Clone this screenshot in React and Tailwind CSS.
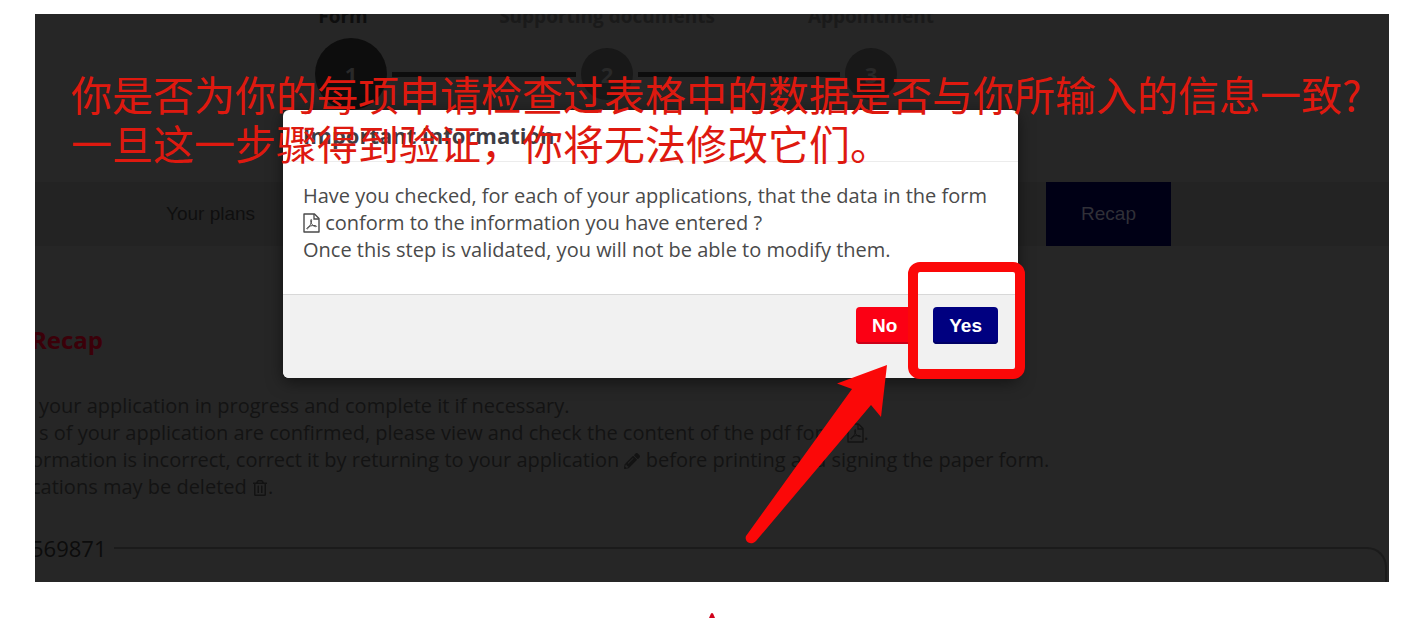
import { FaPencilAlt, FaRegTrashAlt } from 'react-icons/fa';

const PdfIcon = ({ className }) => (
  <svg viewBox="0 0 17 20" fill="none" stroke="currentColor" className={className} aria-hidden="true">
    <path d="M1 1h10.500l4.500 4.500V19H1z" strokeWidth="1.400" strokeLinejoin="round" />
    <path d="M11 1v5h5" strokeWidth="1.300" />
    <path
      d="M8 6.500c-.8 1.500.2 3.800 1.400 5.300 1.200 1.500 3 2.200 4 1.700.7-.7-1.600-1.300-4-.9-2.300.3-4.600 1.200-5.500 2.600-.5 1 .6 1.100 1.500-.2 1.400-2 2.900-4.900 3.200-6.900.1-1-.2-1.900-.6-1.600z"
      strokeWidth="1"
    />
  </svg>
);

const steps = ['Form', 'Supporting documents', 'Appointment'];

const Stepper = () => (
  <div className="-mt-2.5">
    {/* step names */}
    <div className="ml-[176px] grid w-[792px] grid-cols-3 text-center text-[19px] leading-6 font-bold text-[#1a1a1a]">
      {steps.map((step, index) => (
        <span key={step} className={index === 0 ? 'text-[#0e0e0e]' : ''}>
          {step}
        </span>
      ))}
    </div>

    {/* numbered circles */}
    <div className="mt-2.5 ml-[280px] flex items-center text-[22px] font-bold text-[#292929]">
      <span className="flex size-[72px] items-center justify-center rounded-full bg-[#0d0d0d]">1</span>
      <span className="mx-[5px] h-[5px] w-[184px] bg-[#0d0d0d]" />
      <span className="flex size-[52px] items-center justify-center rounded-full bg-[#181818]">2</span>
      <span className="mx-[5px] h-[5px] w-[202px] bg-[#0d0d0d]" />
      <span className="flex size-[52px] items-center justify-center rounded-full bg-[#181818]">3</span>
    </div>
  </div>
);

const Modal = () => (
  <div
    role="dialog"
    aria-labelledby="modal-title"
    className="absolute top-24 left-[248px] w-[735px] overflow-hidden rounded-md bg-white text-[#4a4a4a] shadow-[0_4px_16px_rgba(0,0,0,0.5)]"
  >
    <h2 id="modal-title" className="border-b border-[#ececec] px-5 py-3 text-[22px] leading-[27px] font-bold text-[#3d3d44]">
      Important information
    </h2>
    <p className="px-5 pt-5 pb-[31px] text-xl leading-[27px] whitespace-nowrap">
      Have you checked, for each of your applications, that the data in the form
      <br />
      <PdfIcon className="inline h-5 w-[17px] align-[-3px]" /> conform to the information you have entered ?
      <br />
      Once this step is validated, you will not be able to modify them.
    </p>
    <div className="flex justify-end gap-5 border-t border-[#d8d8d8] bg-[#f1f1f1] px-5 pt-3 pb-[34px] font-['Liberation_Sans',sans-serif] text-[19px] font-bold text-white">
      <button type="button" className="h-[37px] rounded-sm bg-[#fb0014] px-4 pt-0.5 shadow-[inset_0_-2px_0_#cc0018]">
        No
      </button>
      <button type="button" className="h-[37px] rounded-sm bg-[#000080] px-4 pt-0.5 shadow-[inset_0_-2px_0_#000066]">
        Yes
      </button>
    </div>
  </div>
);

const App = () => {
  return (
    <main className="overflow-hidden bg-white pt-3.5 pr-[37px] pl-[35px] font-['Open_Sans',sans-serif]">
      <div className="relative overflow-hidden bg-[#262626]">
        <Stepper />

        {/* tabs */}
        <nav className="mt-[72px] flex h-16 justify-between bg-[#232323] pr-[218px] pl-24 font-['Liberation_Sans',sans-serif] text-[19px]">
          <button type="button" className="px-[35px] text-[#0f0f0f]">Your plans</button>
          <button type="button" className="bg-[#000015] px-[35px] text-[#303038]">Recap</button>
        </nav>

        {/* recap */}
        <section className="-ml-1 text-[#131313]">
          <h1 className="mt-[78px] text-2xl leading-8 font-bold text-[#3b0009]">Recap</h1>
          <div className="mt-9 text-xl leading-[27px] whitespace-nowrap">
            <p className="pl-2">your application in progress and complete it if necessary.</p>
            <p className="pl-2">
              s of your application are confirmed, please view and check the content of the pdf form{' '}
              <PdfIcon className="inline h-5 w-[17px] align-[-3px]" />.
            </p>
            <p>
              ormation is incorrect, correct it by returning to your application{' '}
              <FaPencilAlt className="inline size-4 align-[-2px]" /> before printing and signing the paper form.
            </p>
            <p>
              cations may be deleted <FaRegTrashAlt className="inline size-4 align-[-2px]" />.
            </p>
          </div>
          <fieldset className="mt-8 mr-0.5 rounded-tr-[20px] border-t-2 border-r-2 border-[#1b1b1b] pb-[18px]">
            <legend className="pr-2 text-[22px] leading-8 text-[#0c0c0c]">569871</legend>
          </fieldset>
        </section>

        <Modal />

        {/* translated note */}
        <p
          lang="zh-CN"
          className="absolute top-[55px] left-9 font-['Noto_Sans_CJK_SC',sans-serif] text-[41px] leading-[49px] whitespace-nowrap text-[#de190f]"
        >
          你是否为你的每项申请检查过表格中的数据是否与你所输入的信息一致?
          <br />
          一旦这一步骤得到验证，你将无法修改它们。
        </p>

        {/* highlight around "Yes" and arrow */}
        <div className="absolute top-[248px] left-[873px] size-[117px] rounded-xl border-10 border-[#fb0808]" />
        <svg viewBox="0 0 142 179" className="absolute top-[351px] left-[710px] h-[179px] w-[142px]" aria-hidden="true">
          <path d="M142 0 92 18.500l15 5.500L1 171c-2 6 5 10 10 5L126 40l10 12z" fill="#fb0808" />
        </svg>
      </div>

      {/* tip of the red mark below */}
      <div className="mt-[31px] flex justify-center">
        <svg viewBox="0 0 6 5" className="h-[5px] w-1.5" aria-hidden="true">
          <path d="M0 5 2 .5Q3-.5 4 .5L6 5z" fill="#d0021b" />
        </svg>
      </div>
    </main>
  );
};

export default App;
